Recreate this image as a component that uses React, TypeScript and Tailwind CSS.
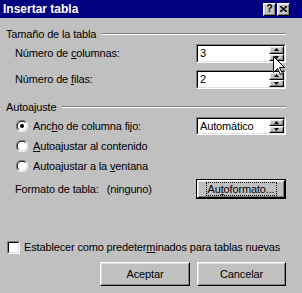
import type { ReactNode } from "react";

function Sunken({ className, children }: { className: string; children: ReactNode }) {
  return (
    <div className={`border border-t-[#808080] border-l-[#808080] border-b-white border-r-white ${className}`}>
      <div className="h-full border border-t-black border-l-black border-b-[#dfdfdf] border-r-[#dfdfdf] bg-white flex items-center">
        {children}
      </div>
    </div>
  );
}

function Raised({ className, children }: { className: string; children?: ReactNode }) {
  return (
    <div className={`border border-t-white border-l-white border-b-black border-r-black bg-[#c0c0c0] ${className}`}>
      <div className="h-full border border-t-[#dfdfdf] border-l-[#dfdfdf] border-b-[#808080] border-r-[#808080] flex items-center justify-center">
        {children}
      </div>
    </div>
  );
}

function Arrow({ down }: { down?: boolean }) {
  return (
    <svg width="5" height="3" viewBox="0 0 5 3">
      <path d={down ? "M0 0h5L2.5 3z" : "M2.5 0L5 3H0z"} fill="black" />
    </svg>
  );
}

function Spinner() {
  return (
    <div className="ml-auto flex flex-col h-full">
      <Raised className="w-[15px] flex-1">
        <Arrow />
      </Raised>
      <Raised className="w-[15px] flex-1">
        <Arrow down />
      </Raised>
    </div>
  );
}

function Radio({ checked }: { checked?: boolean }) {
  return (
    <svg width="12" height="12" viewBox="0 0 12 12" className="shrink-0">
      <circle cx="6" cy="6" r="5" fill="white" />
      <path d="M1.8 10.2A5.5 5.5 0 0 1 10.2 1.8" stroke="#808080" strokeWidth="1" fill="none" />
      <path d="M2.6 9.4A4.4 4.4 0 0 1 9.4 2.6" stroke="black" strokeWidth="1" fill="none" />
      <path d="M10.2 1.8A5.5 5.5 0 0 1 1.8 10.2" stroke="white" strokeWidth="1" fill="none" />
      <path d="M9.4 2.6A4.4 4.4 0 0 1 2.6 9.4" stroke="#dfdfdf" strokeWidth="1" fill="none" />
      {checked && <circle cx="6" cy="6" r="2" fill="black" />}
    </svg>
  );
}

function GroupHeader({ label }: { label: string }) {
  return (
    <div className="h-[14px] flex items-center">
      <span className="leading-[14px]">{label}</span>
      <div className="flex-1 ml-[6px] border-t border-t-[#808080] border-b border-b-white" />
    </div>
  );
}

export default function App() {
  return (
    <div className="w-[302px] h-[293px] bg-[#c0c0c0] overflow-hidden relative whitespace-nowrap font-['Liberation_Sans',Arial,sans-serif] text-[11px] tracking-[-0.15px] text-black">
      {/* title bar */}
      <div className="h-[18px] bg-[#000080] flex items-center pl-[3px] pr-[12px]">
        <span className="text-white font-bold text-[12px] tracking-normal">Insertar tabla</span>
        <div className="ml-auto flex gap-[1px]">
          <Raised className="w-[13px] h-[13px]">
            <span className="font-bold text-[10px] leading-none">?</span>
          </Raised>
          <Raised className="w-[13px] h-[13px]">
            <svg width="7" height="6" viewBox="0 0 7 6">
              <path d="M0 0L7 6M7 0L0 6" stroke="black" strokeWidth="1.5" />
            </svg>
          </Raised>
        </div>
      </div>

      <div className="pl-[6px] pr-[16px] flex flex-col">
        <div className="mt-[9px]">
          <GroupHeader label="Tamaño de la tabla" />
        </div>

        <div className="mt-[3px] h-[19px] flex items-center pl-[9px]">
          <span>
            Número de <u>c</u>olumnas:
          </span>
          <Sunken className="ml-auto w-[90px] h-[19px]">
            <span className="pl-[2px]">3</span>
            <Spinner />
          </Sunken>
        </div>

        <div className="mt-[7px] h-[19px] flex items-center pl-[9px]">
          <span>
            Número de <u>f</u>ilas:
          </span>
          <Sunken className="ml-auto w-[90px] h-[19px]">
            <span className="pl-[2px]">2</span>
            <Spinner />
          </Sunken>
        </div>

        <div className="mt-[11px]">
          <GroupHeader label="Autoajuste" />
        </div>

        <div className="mt-[3px] h-[18px] flex items-center pl-[10px]">
          <Radio checked />
          <span className="ml-[5px]">
            Anc<u>h</u>o de columna fijo:
          </span>
          <Sunken className="ml-auto w-[90px] h-[18px]">
            <span className="pl-[2px]">Automático</span>
            <Spinner />
          </Sunken>
        </div>

        <div className="mt-[4px] h-[14px] flex items-center pl-[10px]">
          <Radio />
          <span className="ml-[5px]">
            <u>A</u>utoajustar al contenido
          </span>
        </div>

        <div className="mt-[6px] h-[14px] flex items-center pl-[10px]">
          <Radio />
          <span className="ml-[5px]">
            Autoajustar a la <u>v</u>entana
          </span>
        </div>

        <div className="mt-[6px] h-[20px] flex items-center pl-[9px]">
          <span>Formato de tabla:</span>
          <span className="ml-[8px]">(ninguno)</span>
          <div className="ml-auto w-[90px] h-[20px] border border-black">
            <Raised className="h-full">
              <span className="border border-dotted border-black px-[1px] leading-[12px]">
                Au<u>t</u>oformato...
              </span>
            </Raised>
          </div>
        </div>

        <div className="mt-[41px] h-[14px] flex items-center pl-[1px]">
          <div className="shrink-0 w-[13px] h-[13px] border border-t-[#808080] border-l-[#808080] border-b-white border-r-white">
            <div className="h-full border border-t-black border-l-black border-b-[#dfdfdf] border-r-[#dfdfdf] bg-white" />
          </div>
          <span className="ml-[4px]">
            Establecer como predeter<u>m</u>inados para tablas nuevas
          </span>
        </div>

        <div className="mt-[8px] flex justify-end gap-[7px]">
          <Raised className="w-[90px] h-[24px]">Aceptar</Raised>
          <Raised className="w-[89px] h-[24px]">Cancelar</Raised>
        </div>
      </div>

      {/* mouse pointer */}
      <svg width="12" height="19" viewBox="0 0 12 19" className="absolute left-[273px] top-[56px]">
        <path d="M0.5 0.5V16.5L4.5 12.5L7.5 18.5L9.5 17.5L6.5 11.5H11.5Z" fill="white" stroke="black" strokeWidth="1" />
      </svg>
    </div>
  );
}
